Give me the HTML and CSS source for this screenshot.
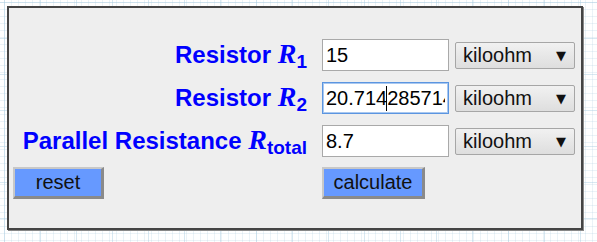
FILE: index.html
```html
<!DOCTYPE html>
<html>
<head>
<meta charset="utf-8">
<link rel="stylesheet" href="styles.css">
</head>
<body>
<div class="panel">
  <div class="form">
    <div class="label">Resistor <i class="var">R</i><sub class="sub">1</sub></div>
    <input class="field" type="text" value="15">
    <div class="select"><span>kiloohm</span><span class="arrow">▼</span></div>

    <div class="label">Resistor <i class="var">R</i><sub class="sub">2</sub></div>
    <div class="field-wrap">
      <input class="field focused" type="text" value="20.7142857142857">
      <span class="caret"></span>
    </div>
    <div class="select"><span>kiloohm</span><span class="arrow">▼</span></div>

    <div class="label">Parallel Resistance <i class="var">R</i><sub class="sub">total</sub></div>
    <input class="field" type="text" value="8.7">
    <div class="select"><span>kiloohm</span><span class="arrow">▼</span></div>

    <div class="btn-cell"><button class="btn btn-reset">reset</button></div>
    <div class="btn-cell"><button class="btn btn-calc">calculate</button></div>
    <div></div>
  </div>
</div>
</body>
</html>
```
FILE: styles.css
```css
html, body {
  margin: 0;
  padding: 0;
}
body {
  width: 597px;
  height: 242px;
  overflow: hidden;
  font-family: "Liberation Sans", Arial, sans-serif;
  background-color: #ffffff;
  background-image:
    linear-gradient(to right, rgba(170, 205, 225, 0.45) 1px, transparent 1px),
    linear-gradient(to bottom, rgba(170, 205, 225, 0.45) 1px, transparent 1px),
    linear-gradient(to right, rgba(190, 215, 230, 0.3) 1px, transparent 1px),
    linear-gradient(to bottom, rgba(190, 215, 230, 0.3) 1px, transparent 1px);
  background-size: 36px 36px, 36px 36px, 7px 7px, 7px 7px;
  background-position: 4px 2px, 4px 2px, 4px 2px, 4px 2px;
  padding-top: 6px;
  padding-left: 7px;
  box-sizing: border-box;
}
.panel {
  width: 576px;
  height: 224px;
  box-sizing: border-box;
  border: 2px solid #444;
  box-shadow: 1px 1px 0 #888;
  background: #eeeeee;
  padding: 31px 0 0 4px;
}
.form {
  display: grid;
  grid-template-columns: 303px 127px 120px;
  grid-auto-rows: 32px;
  column-gap: 6px;
  row-gap: 11px;
  align-items: center;
}
.label {
  text-align: right;
  padding-right: 9px;
  color: #0000ff;
  font-weight: bold;
  font-size: 24px;
  line-height: 32px;
  white-space: nowrap;
}
.var {
  font-family: "Liberation Serif", "Times New Roman", serif;
  font-style: italic;
  font-weight: bold;
  font-size: 28px;
  line-height: 0;
}
.sub {
  font-size: 19px;
  line-height: 0;
  vertical-align: -5px;
}
.field-wrap {
  position: relative;
  height: 32px;
}
.field {
  width: 127px;
  height: 32px;
  box-sizing: border-box;
  border: 1px solid #a9a9a9;
  background: #fff;
  font-family: "Liberation Sans", Arial, sans-serif;
  font-size: 20px;
  color: #000;
  padding: 0 3px;
  margin: 0;
  outline: none;
}
.field.focused {
  border: 1px solid #5b95e0;
  box-shadow: 0 0 0 1px #a9c8f0 inset;
}
.caret {
  position: absolute;
  left: 64px;
  top: 4px;
  width: 1px;
  height: 25px;
  background: #000;
}
.select {
  height: 27px;
  box-sizing: border-box;
  border: 1px solid #a6a6a6;
  border-radius: 2px;
  background: linear-gradient(#f1f1f1, #dedede);
  display: flex;
  justify-content: space-between;
  align-items: center;
  padding: 0 8px 0 7px;
  font-size: 20px;
  color: #111;
}
.arrow {
  font-size: 13px;
  font-family: "DejaVu Sans", sans-serif;
}
.btn-cell {
  display: flex;
  align-items: center;
  margin-top: -2px;
}
.btn {
  height: 32px;
  box-sizing: border-box;
  background: #6699ff;
  border-style: solid;
  border-width: 2px 3px 3px 2px;
  border-color: #c8c8c8 #8a8a8a #8a8a8a #c8c8c8;
  font-family: "Liberation Sans", Arial, sans-serif;
  font-size: 20px;
  color: #111;
  padding: 0;
  margin: 0;
}
.btn-reset {
  width: 91px;
}
.btn-calc {
  width: 103px;
}
```
